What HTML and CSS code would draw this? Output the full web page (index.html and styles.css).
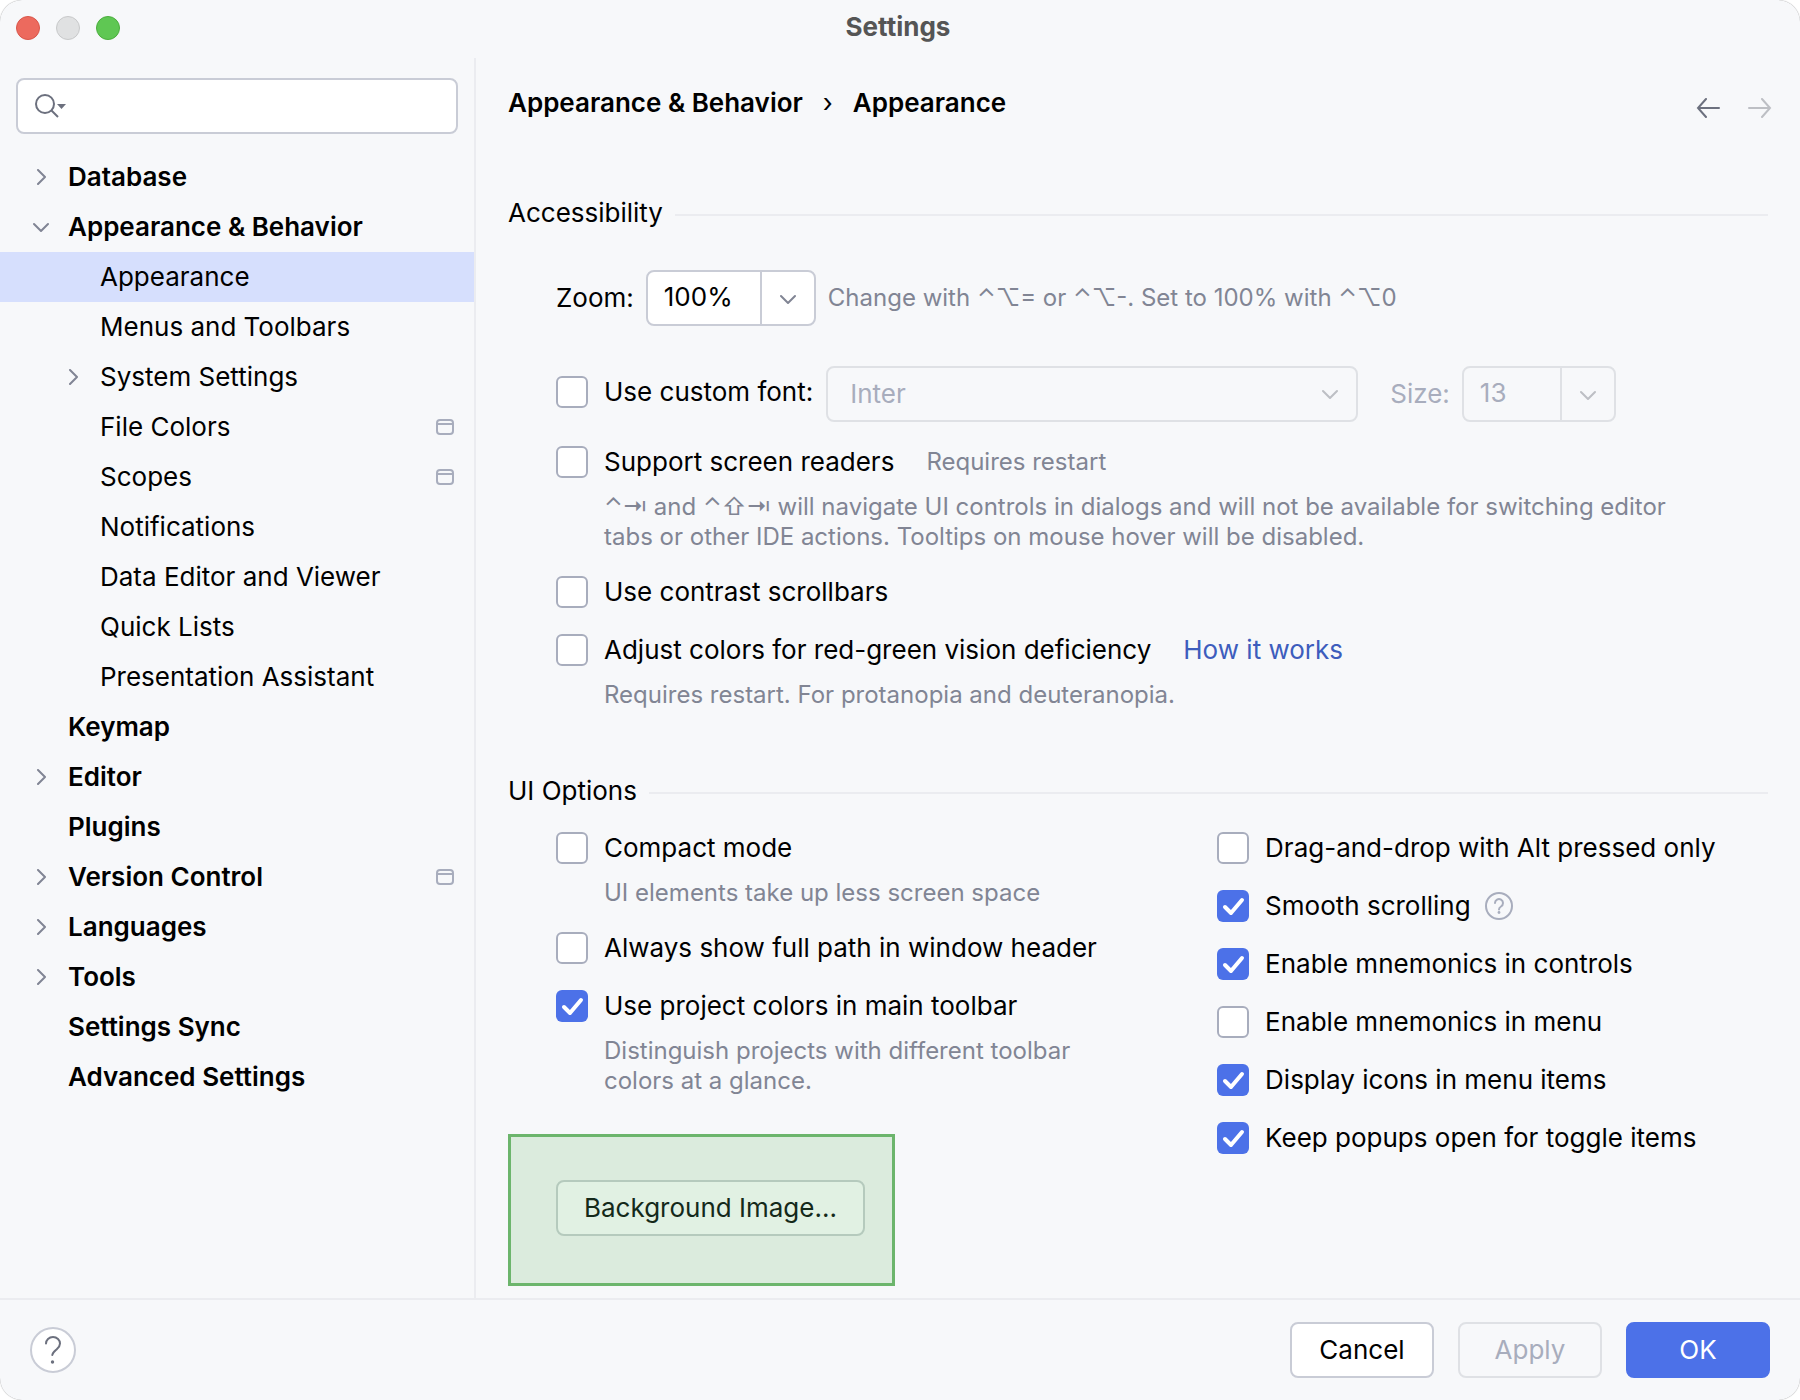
FILE: index.html
```html
<!DOCTYPE html>
<html lang="en">
<head>
<meta charset="utf-8">
<title>Settings</title>
<link rel="stylesheet" href="styles.css">
</head>
<body>
<svg class="sprite" aria-hidden="true">
  <symbol id="right" viewBox="0 0 16 16"><path d="M5 1l7 7-7 7" fill="none" stroke="currentColor" stroke-width="2" stroke-linecap="round" stroke-linejoin="round"/></symbol>
  <symbol id="down" viewBox="0 0 16 16"><path d="M1 5l7 7 7-7" fill="none" stroke="currentColor" stroke-width="2" stroke-linecap="round" stroke-linejoin="round"/></symbol>
  <symbol id="project" viewBox="0 0 18 16"><path d="M1 5h16M4 1h10a3 3 0 0 1 3 3v8a3 3 0 0 1-3 3H4a3 3 0 0 1-3-3V4a3 3 0 0 1 3-3z" fill="none" stroke="currentColor" stroke-width="2"/></symbol>
</svg>
<div class="window">
  <header class="titlebar">
    <div class="lights">
      <button class="light close" aria-label="Close"></button>
      <button class="light minimize" aria-label="Minimize" disabled></button>
      <button class="light maximize" aria-label="Maximize"></button>
    </div>
    <h1 class="title">Settings</h1>
  </header>

  <div class="body">
    <aside class="sidebar">
      <div class="search">
        <svg class="search-icon" viewBox="0 0 34 26" aria-hidden="true">
          <circle cx="11" cy="11" r="9" fill="none" stroke="currentColor" stroke-width="2"/>
          <path d="M17.500 17.500l6.500 6.500" fill="none" stroke="currentColor" stroke-width="2"/>
          <path d="M23 11h9l-4.500 5z" fill="currentColor"/>
        </svg>
        <input class="search-input" type="text" aria-label="Search settings">
      </div>
      <nav>
        <ul class="tree">
          <li><a class="node group" href="#"><svg class="arrow"><use href="#right"/></svg><span>Database</span></a></li>
          <li><a class="node group" href="#"><svg class="arrow"><use href="#down"/></svg><span>Appearance &amp; Behavior</span></a>
            <ul class="branch">
              <li><a class="node child selected" href="#" aria-current="page"><span class="arrow"></span><span>Appearance</span></a></li>
              <li><a class="node child" href="#"><span class="arrow"></span><span>Menus and Toolbars</span></a></li>
              <li><a class="node child" href="#"><svg class="arrow"><use href="#right"/></svg><span>System Settings</span></a></li>
              <li><a class="node child" href="#"><span class="arrow"></span><span>File Colors</span><svg class="project"><use href="#project"/></svg></a></li>
              <li><a class="node child" href="#"><span class="arrow"></span><span>Scopes</span><svg class="project"><use href="#project"/></svg></a></li>
              <li><a class="node child" href="#"><span class="arrow"></span><span>Notifications</span></a></li>
              <li><a class="node child" href="#"><span class="arrow"></span><span>Data Editor and Viewer</span></a></li>
              <li><a class="node child" href="#"><span class="arrow"></span><span>Quick Lists</span></a></li>
              <li><a class="node child" href="#"><span class="arrow"></span><span>Presentation Assistant</span></a></li>
            </ul>
          </li>
          <li><a class="node group" href="#"><span class="arrow"></span><span>Keymap</span></a></li>
          <li><a class="node group" href="#"><svg class="arrow"><use href="#right"/></svg><span>Editor</span></a></li>
          <li><a class="node group" href="#"><span class="arrow"></span><span>Plugins</span></a></li>
          <li><a class="node group" href="#"><svg class="arrow"><use href="#right"/></svg><span>Version Control</span><svg class="project"><use href="#project"/></svg></a></li>
          <li><a class="node group" href="#"><svg class="arrow"><use href="#right"/></svg><span>Languages</span></a></li>
          <li><a class="node group" href="#"><svg class="arrow"><use href="#right"/></svg><span>Tools</span></a></li>
          <li><a class="node group" href="#"><span class="arrow"></span><span>Settings Sync</span></a></li>
          <li><a class="node group" href="#"><span class="arrow"></span><span>Advanced Settings</span></a></li>
        </ul>
      </nav>
    </aside>

    <main class="content">
      <div class="topline">
        <nav class="crumbs" aria-label="Breadcrumb"><a href="#">Appearance &amp; Behavior</a><span class="sep">›</span><span>Appearance</span></nav>
        <div class="history">
          <button class="nav-button" aria-label="Back"><svg viewBox="0 0 24 20"><path d="M23 10H2M10 1l-8 9 8 9" fill="none" stroke="currentColor" stroke-width="2" stroke-linecap="round"/></svg></button>
          <button class="nav-button" aria-label="Forward" disabled><svg viewBox="0 0 24 20"><path d="M1 10h21M14 1l8 9-8 9" fill="none" stroke="currentColor" stroke-width="2" stroke-linecap="round"/></svg></button>
        </div>
      </div>

      <section>
        <h2 class="section-title">Accessibility</h2>
        <div class="options accessibility">
          <div class="zoom-row">
            <label for="zoom">Zoom:</label>
            <div class="combo zoom">
              <input id="zoom" class="combo-input" type="text" value="100%">
              <button class="combo-button" aria-label="Show zoom levels"><svg class="chevron"><use href="#down"/></svg></button>
            </div>
            <span class="hint">Change with ⌃⌥= or ⌃⌥-. Set to 100% with ⌃⌥0</span>
          </div>
          <div class="font-row">
            <label class="check"><input type="checkbox"><span>Use custom font:</span></label>
            <div class="select-wrap">
              <select class="select" aria-label="Font" disabled><option>Inter</option></select>
              <svg class="chevron"><use href="#down"/></svg>
            </div>
            <label class="size-label" for="size">Size:</label>
            <div class="combo size">
              <input id="size" class="combo-input" type="text" value="13" disabled>
              <button class="combo-button" aria-label="Show font sizes" disabled><svg class="chevron"><use href="#down"/></svg></button>
            </div>
          </div>
          <div class="option">
            <div class="line"><label class="check"><input type="checkbox"><span>Support screen readers</span></label><span class="hint">Requires restart</span></div>
            <p class="hint note">⌃⇥ and ⌃⇧⇥ will navigate UI controls in dialogs and will not be available for switching editor tabs or other IDE actions. Tooltips on mouse hover will be disabled.</p>
          </div>
          <label class="check"><input type="checkbox"><span>Use contrast scrollbars</span></label>
          <div class="option">
            <div class="line"><label class="check"><input type="checkbox"><span>Adjust colors for red-green vision deficiency</span></label><a class="link" href="#">How it works</a></div>
            <p class="hint note">Requires restart. For protanopia and deuteranopia.</p>
          </div>
        </div>
      </section>

      <section>
        <h2 class="section-title">UI Options</h2>
        <div class="columns">
          <div class="options">
            <div class="option">
              <label class="check"><input type="checkbox"><span>Compact mode</span></label>
              <p class="hint note">UI elements take up less screen space</p>
            </div>
            <label class="check"><input type="checkbox"><span>Always show full path in window header</span></label>
            <div class="option">
              <label class="check"><input type="checkbox" checked><span>Use project colors in main toolbar</span></label>
              <p class="hint note narrow">Distinguish projects with different toolbar colors at a glance.</p>
            </div>
            <div class="highlight"><button class="button background-button">Background Image...</button></div>
          </div>
          <div class="options">
            <label class="check"><input type="checkbox"><span>Drag-and-drop with Alt pressed only</span></label>
            <div class="line help-line">
              <label class="check"><input type="checkbox" checked><span>Smooth scrolling</span></label>
              <svg class="tip" viewBox="0 0 28 28" role="img" aria-label="More information">
                <circle cx="14" cy="14" r="13" fill="none" stroke="currentColor" stroke-width="2"/>
                <path d="M10 11a4 4 0 1 1 6 3.500c-1.400.8-2 1.400-2 3" fill="none" stroke="currentColor" stroke-width="2" stroke-linecap="round"/>
                <circle cx="14" cy="20.500" r="1.400" fill="currentColor"/>
              </svg>
            </div>
            <label class="check"><input type="checkbox" checked><span>Enable mnemonics in controls</span></label>
            <label class="check"><input type="checkbox"><span>Enable mnemonics in menu</span></label>
            <label class="check"><input type="checkbox" checked><span>Display icons in menu items</span></label>
            <label class="check"><input type="checkbox" checked><span>Keep popups open for toggle items</span></label>
          </div>
        </div>
      </section>
    </main>
  </div>

  <footer class="footer">
    <button class="help" aria-label="Help">
      <svg viewBox="0 0 16 28"><path d="M1 7.500C1 4 4 1 8 1s7 3 7 6.500c0 3-1.500 4.200-3.500 6C9 15.800 7.500 17 7.300 19" fill="none" stroke="currentColor" stroke-width="2" stroke-linecap="round"/><circle cx="7.500" cy="26" r="1.700" fill="currentColor"/></svg>
    </button>
    <div class="actions">
      <button class="button">Cancel</button>
      <button class="button" disabled>Apply</button>
      <button class="button primary">OK</button>
    </div>
  </footer>
</div>
</body>
</html>
```
FILE: styles.css
```css
:root {
  --surface: #f7f8fa;
  --line: #ebecf0;
  --border: #c9ccd6;
  --border-disabled: #dfe1e5;
  --text-disabled: #a8adbd;
  --hint: #818594;
  --icon: #6c707e;
  --accent: #4c71e8;
}

* {
  box-sizing: border-box;
}

body {
  margin: 0;
  background: #fff;
  color: #000;
  font: 26px/32px Inter, "Liberation Sans", sans-serif;
}

button,
input,
select {
  margin: 0;
  color: inherit;
  font: inherit;
}

a {
  color: inherit;
  text-decoration: none;
}

h1,
h2,
p,
ul {
  margin: 0;
  padding: 0;
  font-size: inherit;
  font-weight: inherit;
}

ul {
  list-style: none;
}

svg {
  display: block;
  flex: none;
}

.sprite {
  display: none;
}

.window {
  display: flex;
  flex-direction: column;
  min-height: 100vh;
  border-radius: 22px;
  background: var(--surface);
  box-shadow: 0 0 1px #8a8a8a;
}

/* Title bar */

.titlebar {
  display: grid;
  grid-template-columns: 1fr auto 1fr;
  align-items: start;
  height: 58px;
  padding: 11px 20px 0 16px;
}

.lights {
  display: flex;
  gap: 16px;
  padding-top: 5px;
}

.light {
  width: 24px;
  height: 24px;
  padding: 0;
  border: 1px solid;
  border-radius: 50%;
}

.close {
  border-color: #d9564a;
  background: #ec6a5e;
}

.minimize {
  border-color: #c8c9ca;
  background: #e0e1e2;
}

.maximize {
  border-color: #4bae3d;
  background: #5fc753;
}

.title {
  color: #555;
  font-weight: 700;
}

.body {
  display: flex;
  flex: 1;
}

/* Sidebar */

.sidebar {
  flex: none;
  width: 476px;
  border-right: 2px solid var(--line);
}

.search {
  display: flex;
  align-items: center;
  height: 56px;
  margin: 20px 16px 18px;
  padding: 0 16px;
  border: 2px solid var(--border);
  border-radius: 8px;
  background: #fff;
}

.search-icon {
  width: 34px;
  height: 26px;
  color: var(--icon);
}

.search-input {
  flex: 1;
  min-width: 0;
  border: 0;
  outline: 0;
  background: none;
}

.node {
  display: flex;
  align-items: center;
  gap: 19px;
  height: 50px;
  padding: 0 20px 0 33px;
}

.group {
  font-weight: 600;
}

.child {
  padding-left: 65px;
}

.selected {
  background: #d6dffd;
}

.arrow {
  width: 16px;
  height: 16px;
  color: var(--hint);
}

.project {
  width: 18px;
  height: 16px;
  margin-left: auto;
  color: var(--text-disabled);
}

/* Content */

.content {
  flex: 1;
  padding: 28px 32px 12px;
}

.topline,
.crumbs,
.history,
.line,
.zoom-row,
.font-row {
  display: flex;
  align-items: center;
}

.topline {
  justify-content: space-between;
  height: 44px;
  margin-bottom: 67px;
}

.crumbs {
  gap: 20px;
  padding-bottom: 10px;
  font-weight: 600;
}

.sep {
  font-weight: 400;
}

.history {
  gap: 28px;
  margin-right: -4px;
}

.nav-button {
  padding: 0;
  border: 0;
  background: none;
  color: var(--icon);
}

.nav-button svg {
  width: 24px;
  height: 20px;
}

.nav-button:disabled {
  color: #bdbfc4;
}

.section-title {
  display: flex;
  align-items: center;
  gap: 12px;
}

.section-title::after {
  content: "";
  flex: 1;
  height: 2px;
  margin-top: 4px;
  background: var(--line);
}

.options {
  display: flex;
  flex-direction: column;
  align-items: flex-start;
  gap: 26px;
}

.accessibility {
  padding: 41px 0 0 48px;
}

.zoom-row {
  gap: 12px;
  margin-bottom: 14px;
}

.font-row {
  margin-bottom: -2px;
}

.font-row .check {
  padding-bottom: 4px;
}

.hint {
  color: var(--hint);
  font-size: 24px;
  line-height: 30px;
}

.note {
  max-width: 1120px;
  margin-bottom: -2px;
  padding: 14px 0 0 48px;
}

.narrow {
  max-width: 560px;
}

.line {
  gap: 32px;
}

.help-line {
  gap: 14px;
}

.tip {
  width: 28px;
  height: 28px;
  color: var(--text-disabled);
}

.link {
  color: #3d5dbd;
}

/* Controls */

.check {
  display: flex;
  align-items: center;
  gap: 16px;
}

.check input {
  flex: none;
  width: 32px;
  height: 32px;
  border: 2px solid var(--text-disabled);
  border-radius: 6px;
  background: #fff;
  appearance: none;
}

.check input:checked {
  border: 0;
  background: var(--accent) url("data:image/svg+xml,%3Csvg xmlns='http://www.w3.org/2000/svg' viewBox='0 0 32 32'%3E%3Cpath d='M8 17l6 6L25 10' fill='none' stroke='white' stroke-width='4' stroke-linecap='round' stroke-linejoin='round'/%3E%3C/svg%3E");
}

.combo {
  display: flex;
  height: 56px;
  border: 2px solid var(--border);
  border-radius: 8px;
  background: #fff;
}

.zoom {
  width: 170px;
}

.size {
  width: 154px;
  margin-left: 12px;
}

.combo-input {
  flex: 1;
  min-width: 0;
  padding: 0 0 2px 16px;
  border: 0;
  outline: 0;
  background: none;
}

.combo-button {
  display: flex;
  align-items: center;
  justify-content: center;
  width: 54px;
  padding: 2px 0 0;
  border: 0;
  border-left: 2px solid var(--border);
  background: none;
  color: var(--hint);
}

.chevron {
  width: 16px;
  height: 16px;
}

.combo:has(:disabled),
.combo-button:disabled {
  border-color: var(--border-disabled);
  background: none;
  color: #bdbfc4;
}

.combo-input:disabled,
.size-label {
  color: var(--text-disabled);
}

.size-label {
  margin-left: 32px;
}

.select-wrap {
  display: grid;
  align-items: center;
  width: 532px;
  margin-left: 13px;
  color: #bdbfc4;
}

.select-wrap > * {
  grid-area: 1 / 1;
}

.select-wrap .chevron {
  justify-self: end;
  margin-right: 20px;
}

.select {
  width: 100%;
  height: 56px;
  padding: 0 48px 0 22px;
  border: 2px solid var(--border-disabled);
  border-radius: 8px;
  background: none;
  color: var(--text-disabled);
  opacity: 1;
  appearance: none;
}

.columns {
  display: grid;
  grid-template-columns: 6fr 5fr;
  padding: 25px 0 0 48px;
}

section + section {
  margin-top: 67px;
}

.button {
  min-width: 144px;
  height: 56px;
  padding: 0 26px;
  border: 2px solid var(--border);
  border-radius: 8px;
  background: #fff;
}

.button:disabled {
  border-color: var(--border-disabled);
  background: none;
  color: var(--text-disabled);
}

.primary {
  border-color: var(--accent);
  background: var(--accent);
  color: #fff;
}

.highlight {
  margin: 14px 0 0 -48px;
  padding: 43px 27px 47px 45px;
  border: 3px solid #6cb56c;
  background: #dbebdd;
}

.background-button {
  display: block;
  border-color: #b5cabd;
  background: #e1f1e3;
  color: #14291a;
}

/* Footer */

.footer {
  display: flex;
  align-items: center;
  justify-content: space-between;
  height: 102px;
  padding: 0 30px;
  border-top: 2px solid var(--line);
}

.help {
  display: flex;
  align-items: center;
  justify-content: center;
  width: 46px;
  height: 46px;
  padding: 0;
  border: 2px solid var(--border);
  border-radius: 50%;
  background: #fff;
  color: var(--icon);
}

.help svg {
  width: 16px;
  height: 28px;
}

.actions {
  display: flex;
  gap: 24px;
}
```
